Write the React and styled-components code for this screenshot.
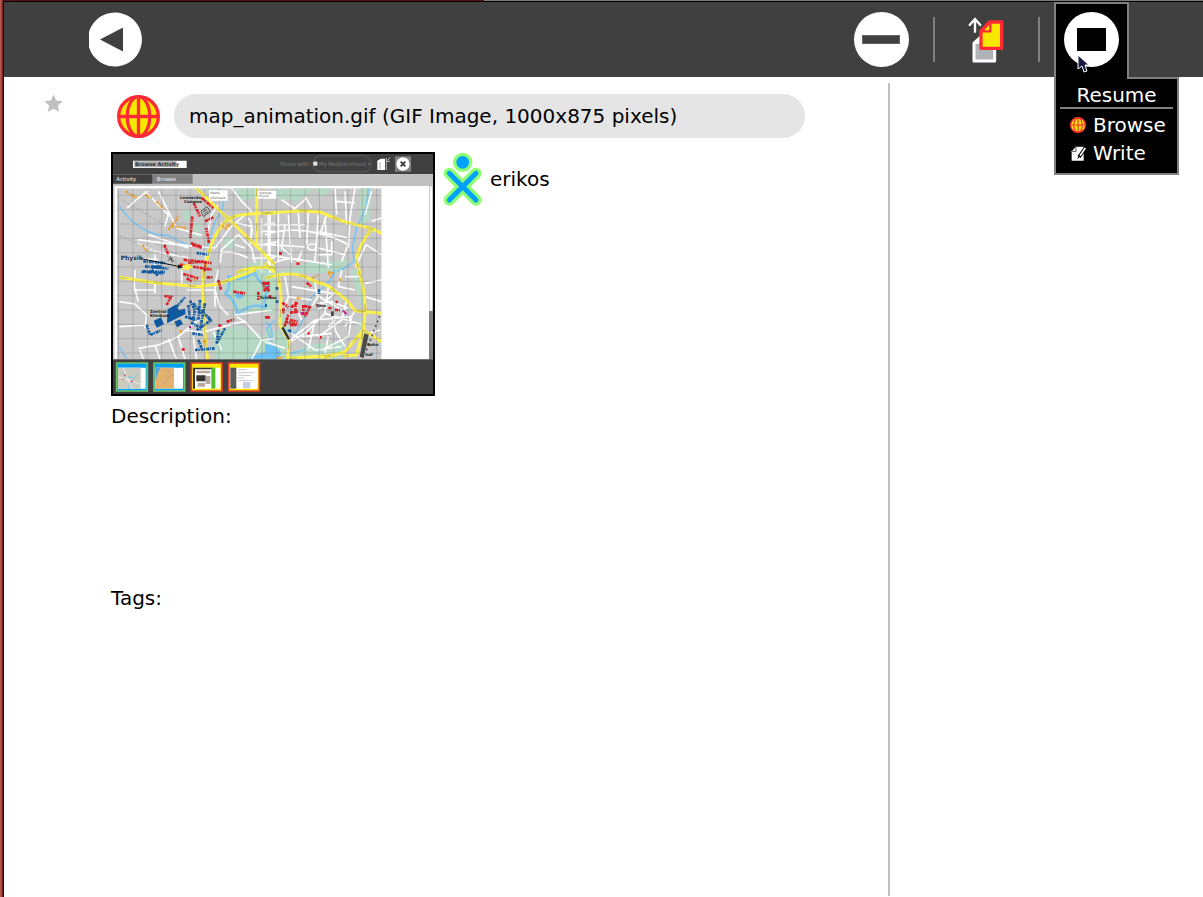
import React from 'react';
import styled, { createGlobalStyle } from 'styled-components';

const GlobalStyle = createGlobalStyle`
  * {
    box-sizing: border-box;
  }
  html, body, #root {
    height: 100%;
  }
  body {
    margin: 0;
    background: #fff;
    color: #000;
    font: 20px/24px "DejaVu Sans", sans-serif;
  }
  button, input, textarea {
    font: inherit;
    color: inherit;
  }
`;

const Frame = styled.div`
  min-height: 100%;
  display: flex;
  flex-direction: column;
  border-left: 4px solid;
  border-image: linear-gradient(to right, #b85555 0 1px, #a83a3a 1px 2px, #7e2525 2px 3px, #000 3px) 4;
`;

const TopEdge = styled.div`
  height: 2px;
  border-bottom: 1px solid #000;
  background: linear-gradient(to right, #5e1414 40%, #7b7b78 40%);
`;

const Toolbar = styled.header`
  display: flex;
  align-items: center;
  gap: 14px;
  height: 75px;
  padding: 0 74px;
  background: #404040;
`;

const Spacer = styled.div`
  flex: 1;
`;

const Separator = styled.div`
  width: 2px;
  height: 45px;
  background: #808080;
`;

const ToolButton = styled.button`
  display: flex;
  align-items: center;
  justify-content: center;
  width: 75px;
  height: 75px;
  padding: 0;
  border: 0;
  background: none;
`;

const Palette = styled.div`
  position: relative;
  height: 75px;
`;

const PaletteButton = styled(ToolButton)`
  position: relative;
  z-index: 2;
  height: 77px;
  padding-bottom: 4px;
  border: 2px solid #808080;
  border-bottom: 0;
  background: #000;
`;

const Menu = styled.div`
  position: absolute;
  z-index: 1;
  top: 100%;
  left: 0;
  width: 125px;
  padding: 4px 4px 6px;
  border: 2px solid #808080;
  background: #000;
  color: #fff;
`;

const MenuTitle = styled.div`
  margin-bottom: 2px;
  border-bottom: 2px solid #808080;
  text-align: center;
`;

const MenuItem = styled.button`
  display: flex;
  align-items: center;
  gap: 7px;
  width: 100%;
  height: 28px;
  padding: 0 0 0 10px;
  border: 0;
  background: none;
`;

const Pointer = styled.svg`
  position: absolute;
  z-index: 3;
  top: 52px;
  left: 23px;
`;

const Page = styled.main`
  flex: 1;
  display: grid;
  grid-template-columns: 884fr 315fr;
`;

const Entry = styled.section`
  display: flex;
  padding: 17px 83px 0 40px;
`;

const Side = styled.aside`
  margin: 6px 0 1px;
  border-left: 2px solid #c0c0c0;
`;

const StarButton = styled.button`
  align-self: flex-start;
  width: 67px;
  height: 19px;
  padding: 0;
  border: 0;
  background: none;
  text-align: left;

  svg {
    display: block;
  }
`;

const Details = styled.div`
  flex: 1;
  min-width: 0;
`;

const TitleRow = styled.div`
  display: flex;
  align-items: center;
  gap: 14px;
  margin-bottom: 14px;
  padding-left: 6px;
`;

const TitleInput = styled.input`
  flex: 1;
  min-width: 0;
  height: 44px;
  padding: 0 15px;
  border: 0;
  border-radius: 22px;
  background: #e5e5e5;
`;

const PreviewRow = styled.div`
  display: flex;
  align-items: flex-start;
  gap: 8px;
  margin-bottom: 8px;
`;

const Preview = styled.svg`
  flex: none;
  width: 324px;
  height: 244px;
  border: 2px solid #000;
`;

const Buddy = styled.div`
  display: flex;
  align-items: center;
  gap: 8px;
`;

const FieldLabel = styled.label`
  display: block;
`;

const TextArea = styled.textarea`
  display: block;
  width: 100%;
  height: 158px;
  padding: 0;
  border: 0;
  outline: 0;
  resize: none;
  background: none;
`;

const Globe = ({ size }) => (
  <svg width={size} height={size} viewBox="0 0 130 130" fill="none" stroke="#ff2b34" strokeWidth="10">
    <circle cx="65" cy="65" r="60" fill="#f8e800" />
    <ellipse cx="65" cy="65" rx="34" ry="60" />
    <path d="M65 5V125M5 65H125" />
  </svg>
);

const BackIcon = () => (
  <svg width="55" height="55" viewBox="0 0 55 55">
    <path fill="#fff" d="M1 20A27 27 0 1 1 1 35z" />
    <path fill="#404040" d="M12 27.5L35 15.5V39.5z" />
  </svg>
);

const MinusIcon = () => (
  <svg width="55" height="55" viewBox="0 0 55 55">
    <circle cx="27.5" cy="27.5" r="27.5" fill="#fff" />
    <rect x="8.5" y="23.5" width="37" height="8" fill="#404040" stroke="#666" strokeWidth="1" />
  </svg>
);

const ResumeIcon = () => (
  <svg width="55" height="55" viewBox="0 0 55 55">
    <circle cx="27.5" cy="27.5" r="27.5" fill="#fff" />
    <rect x="13" y="16" width="29" height="23" />
  </svg>
);

const CopyIcon = () => (
  <svg width="38" height="48" viewBox="383 45 114 144" fill="none" stroke="#fff" strokeLinejoin="round" strokeLinecap="round">
    <path strokeWidth="7" d="M404 92V54M388 72L404 54L420 72" />
    <path strokeWidth="9" fill="#b0b3b7" d="M401 126L421 108H463V180H401z" />
    <path fill="#fff" stroke="none" d="M401 126L421 106V128H401z" />
    <path strokeWidth="10" stroke="#ff2b34" fill="#f8e800" d="M422 90L448 63H484V142H422z" />
    <path strokeWidth="7" stroke="#ff2b34" d="M424 91H450V65" />
  </svg>
);

const WriteIcon = () => (
  <svg width="16" height="17" viewBox="61 434 48 51" fill="none">
    <path fill="#fff" d="M66 453L79 439H102V481H66z" />
    <path stroke="#000" strokeWidth="2" d="M67 453H79V441" />
    <path stroke="#000" strokeWidth="11" d="M108 442L88 470" />
    <path stroke="#fff" strokeWidth="5" d="M107 443L91 466" />
    <path stroke="#000" strokeWidth="3" d="M84 475L90 466" />
  </svg>
);

const BuddyIcon = () => (
  <svg width="39" height="54" viewBox="38 202 117 162" strokeLinecap="round">
    <path stroke="#8dff73" strokeWidth="34" d="M57 266L137 346M137 266L57 346" />
    <circle cx="97" cy="233" r="24" fill="#00a0ff" stroke="#8dff73" strokeWidth="10" />
    <path stroke="#00a0ff" strokeWidth="15" d="M57 266L137 346M137 266L57 346" />
  </svg>
);

const StarIcon = () => (
  <svg width="19" height="19" viewBox="0 0 19 19">
    <path fill="#c0c0c0" d="M9.5 0.5L12.200 6.500L18.700 7.200L13.900 11.600L15.200 18L9.500 14.800L3.800 18L5.100 11.600L0.300 7.200L6.800 6.500z" />
  </svg>
);

// The four quarters of the town map, each in its own coordinates
const quarters = [
  {
    at: 'translate(-24 -18)',
    parks: 'M268 222L286 228L282 268L262 260zM232 188L254 184V214L236 216zM372 264L390 282L380 304L356 300L358 272zM300 121H350L330 150zM390 121H450V150L410 160zM400 375Q410 345 470 340L510 345V375z',
    water: 'M44 175Q70 215 110 240T190 262Q250 300 306 298L330 220L350 190L358 150',
    roads: 'M66 180L100 150L130 128M160 130L215 240L290 262M98 275Q200 290 330 300M120 130L190 200L180 235M130 260L250 300M300 375V310M98 285L150 310L250 330M330 300L375 240L420 200M375 240L345 225M400 260L350 305L345 345M400 260L440 300L450 345M420 300L390 290M470 210V375M490 200V350M470 250H510M455 290H510M440 330H510M380 121L410 160L440 190M430 210Q445 230 440 260M305 265L320 200L340 170M345 315Q380 305 430 330M395 225L440 235L436 290M50 330L160 335M475 230L510 225M150 320V375',
    yellow: 'M275 121L335 180L370 212L440 280L510 350M370 212Q400 195 510 195M370 212Q325 255 310 320L295 375M455 121V295M395 375Q430 352 510 360',
    orange: 'M62 130L95 150M120 140L140 150M154 160L178 185M190 245L215 215L220 200M200 235L245 240M112 290L125 310M350 235L375 235M360 245L372 228',
    red: 'M262 205L256 270M266 165L285 205M300 220L325 208M258 285L290 297M262 291L290 299M236 335L320 345M225 350L320 365M178 290L190 320M312 285L304 240M290 150L325 180M250 345L295 340M302 340L298 372',
    blue: 'M115 340L180 345M120 355L190 362M115 370L180 372M275 315L310 320',
    solid: 'M140 352h30v10h-30z',
  },
  {
    at: 'translate(456 -18)',
    parks: 'M0 130L60 121H150L100 160L50 155zM150 121H200L170 150zM285 121H320L312 220L285 230zM30 375L130 345L250 335L230 375z',
    water: 'M310 121L305 175L275 240L262 300L268 340L240 360L215 370',
    roads: 'M0 260Q60 240 130 250T250 290M0 230H120M15 195V375M40 195V340M70 200L80 345M100 195L105 270M130 195L125 290M160 200L150 340M180 210L190 360M210 121L215 200M240 130L245 230M215 160L270 165M270 121L255 210L250 300M160 250L250 270M20 290L120 297M160 300L240 320M0 320L200 350M250 290L230 340M320 220L350 210M303 290L350 320M303 290L270 360M185 200L165 260M50 155L100 190M120 145L140 180M80 190L125 150M128 297a13 9 0 1 0 26 0a13 9 0 1 0-26 0M60 230L50 300L75 320M300 200L320 130M110 310L95 350M200 280V320H160M0 290L40 280M20 350Q60 325 110 335',
    yellow: 'M0 196L110 188L165 192L235 220L320 242L350 256M320 242Q270 310 275 345L285 375M0 345L30 375',
    orange: 'M190 372L205 375',
    red: 'M42 316h9M94 347h9',
    blue: '',
    solid: '',
  },
  {
    at: 'translate(-24 348)',
    parks: 'M355 40L440 0H510V130L440 125L390 135zM320 190L400 165L510 215V268H330z',
    water: 'M43 230L65 268M510 150L485 175L500 215',
    moat: 'M360 70Q378 58 370 18Q405 40 450 6Q458 42 492 50Q476 75 480 112Q440 95 398 132Q392 88 360 70z',
    lake: 'M428 268Q460 240 510 252V268zM391 76a12 10 0 1 0 24 0a12 10 0 1 0-24 0',
    roads: 'M90 0L88 50L100 95M43 95L90 102L125 135L120 175M43 170L120 165M150 60H85M150 40V70M100 235L160 225L220 200L280 150M105 240L115 268M150 225L165 268M190 205L215 268M330 60L345 110L370 135M300 185L390 160L420 155L470 210L510 205M390 135L500 120M220 200L240 268M340 0L330 40V110M245 60L330 60M240 180L300 190M395 140L420 155M230 0V40M470 210L440 268M265 200L275 268M325 185L350 240',
    yellow: 'M43 22L150 38L280 50L340 42L450 0M298 0L292 50L298 120L300 200L308 268',
    orange: 'M228 180V190M292 215h12M265 30H278',
    red: 'M178 78L198 80L185 105M340 30L348 60M235 12L280 25M245 25L262 35M305 22H325M340 165L350 168M365 155L387 148M475 35L480 65M490 35V65M385 65L420 70M460 65V90M485 142h12M230 238h9',
    blue: 'M255 92L270 120L262 160L280 170M285 90L280 150M265 100L290 130M275 180L320 150M262 190L295 195M125 165L135 195L170 180M215 110L240 82M270 240L330 235M340 180L335 220L360 175M280 210L290 235M110 5L175 10M140 0L160 18M310 140L320 155M240 140L275 150M290 120L315 150M250 105L255 150M300 100L285 180',
    solid: 'M146 152L168 142L177 163L155 173zM188 118L212 104L222 120L240 116L242 132L186 160zM208 155L226 148L234 162L216 172z',
  },
  {
    at: 'translate(456 348)',
    parks: 'M0 170L70 200L60 268H0zM75 250L130 225L240 215L230 268H75zM255 0H275L300 100L290 110zM290 130Q300 160 270 200zM40 130H60L75 185L45 190z',
    water: 'M210 0Q200 40 140 80L120 140L90 190L60 180M0 155Q25 165 20 215M75 250L120 240',
    lake: 'M0 222Q40 225 48 250L40 268H0z',
    roads: 'M60 20L70 80L140 90M150 35L155 75L230 120M80 50L200 70M190 48L180 130L120 190M245 90L230 150L160 200M215 60L160 120M75 210L150 150L260 140M150 150L130 240M260 140L250 200L170 240M270 60L220 50L230 0M80 190L150 240L230 230M200 120L210 180L240 230M180 130L295 165M110 200L200 190M170 60L140 110M240 20H280M300 40L350 30M300 80L350 95M75 215L120 190M190 200L180 250M270 122L240 170M70 80L60 110M85 95L110 150M160 100L200 95L250 115M0 215L60 235M310 190L345 180M210 150L190 170',
    yellow: 'M0 25L40 15Q100 5 140 30L190 48L245 90L270 122L350 130M280 0Q302 60 300 130L295 180L240 245L170 268M40 15L48 80L45 165L72 210L68 268M295 180L350 215M295 180L275 255L235 258M72 265L180 258L240 248',
    orange: 'M140 25L160 15M190 10L200 22M225 25V35M95 85H108M35 265L55 262',
    red: 'M52 98L70 112M78 112L98 98M92 95V130M75 128L100 125M60 155L100 165M75 165H95M115 105V138M136 108L120 140M118 108L138 112M0 40h12M0 55h12M215 92v8M190 114h12M210 120h15M128 190h5M165 202h5M125 38L140 50M15 75V85M0 142h12M55 115V130M58 170L70 135M75 150L98 155',
    blue: 'M162 58V72M32 55h8M32 95h8M70 182h8M0 107h6',
    solid: '',
  },
];

const columns = Array.from({ length: 19 }, (_, i) => 17 + i * 43);
const rows = Array.from({ length: 12 }, (_, i) => 124 + i * 43);

const Layer = ({ of, ...props }) => (
  <g {...props}>
    {quarters.map((q) => q[of] && <path key={q.at} transform={q.at} d={q[of]} />)}
  </g>
);

const TownMap = () => (
  <g clipPath="url(#map)" fill="none" fontFamily="DejaVu Sans, sans-serif">
    <path fill="#c9c9c9" d="M12 103H806V616H12z" />
    <Layer of="parks" fill="#b5d9c4" />
    <Layer of="lake" fill="#6dc1f2" />
    <Layer of="water" stroke="#7dc4ef" strokeWidth="5" />
    <Layer of="moat" stroke="#7dc4ef" strokeWidth="8" strokeLinejoin="round" />
    <Layer of="roads" stroke="#fff" strokeWidth="5" strokeLinejoin="round" />
    <Layer of="yellow" stroke="#fbf04c" strokeWidth="9" strokeLinejoin="round" />
    <Layer of="yellow" stroke="#a09a50" strokeWidth="2" strokeDasharray="24 80" />
    <Layer of="orange" stroke="#f29c1f" strokeWidth="6" strokeDasharray="8 3 4 3" />
    <Layer of="red" stroke="#dd1f24" strokeWidth="8" strokeDasharray="10 2 5 3" />
    <Layer of="blue" stroke="#0d5aa3" strokeWidth="8" strokeDasharray="8 2 4 3" />
    <Layer of="solid" fill="#0d5aa3" />
    <g stroke="#555" strokeOpacity="0.35" strokeWidth="2">
      {columns.map((x) => <path key={x} d={`M${x} 103V616`} />)}
      {rows.map((y) => <path key={y} d={`M12 ${y}H806`} />)}
    </g>
    <path stroke="#999" strokeWidth="2" strokeDasharray="10 5" d="M30 140L150 210M20 245L170 310M130 270L250 330" />
    <path stroke="#555" strokeWidth="3" d="M264 172L282 158L292 172L272 188zM270 173L282 167M274 180L286 172M180 312L164 320M172 306L178 326M166 310L184 322" />
    <path fill="#fbf04c" d="M210 332L228 330L240 338L226 348L208 346z" />
    <path stroke="#111" strokeWidth="3" d="M86 314L200 338" />
    <path fill="#111" d="M196 331L210 340L194 344z" />
    <path fill="#4a4a4a" d="M754 538L767 542L752 612L740 608z" />
    <path stroke="#444" strokeWidth="5" strokeDasharray="5 10" d="M800 486L760 590" />
    <path stroke="#333" strokeWidth="7" d="M508 520L528 556" />
    <path fill="#444" d="M654 472h8v14h-8z" />
    <path stroke="#c9169a" strokeWidth="6" d="M690 470L700 480M562 478h8M228 519h6" />
    <path fill="#fff" d="M288 109H344V140H288zM434 110H490V134H434z" />
    <g fill="#222" fontWeight="bold" fontSize="12">
      <text x="201" y="135">Leonardo</text>
      <text x="213" y="147">Campus</text>
      <text x="23" y="319" fontSize="18">Physik</text>
      <text x="111" y="478">Zentral-</text>
      <text x="111" y="489">Klinikum</text>
      <text x="440" y="434">Schloss</text>
      <text x="609" y="460">Dom</text>
      <text x="762" y="576">Bahn</text>
      <text x="757" y="606">hof</text>
    </g>
    <g fill="#555" fontSize="9">
      <text x="292" y="120">Mathe</text>
      <text x="292" y="134">Informatik</text>
      <text x="438" y="120">Institute</text>
      <text x="438" y="130">Physik</text>
    </g>
  </g>
);

const ScreenPreview = () => (
  <Preview viewBox="0 0 960 720" role="img" aria-label="Preview" fontFamily="DejaVu Sans, sans-serif">
    <clipPath id="map"><path d="M12 103H806V616H12z" /></clipPath>
    <path fill="#fff" d="M0 0H960V720H0z" />
    <path fill="#404040" d="M0 0H960V61H0z" />
    <path fill="#c0c0c0" d="M0 61H960V96H0z" />
    <path fill="#fff" d="M5 96H948V102H5z" />
    <path fill="#404040" d="M0 61H119V89H0z" />
    <path fill="#808080" d="M119 61H239V89H119z" />
    <path fill="#fff" d="M60 20H221V42H60z" />
    <path fill="#aaa" d="M64 22H190V40H64z" />
    <text x="66" y="37" fontSize="15" fontWeight="bold" fill="#333">Browse Activity</text>
    <text x="10" y="81" fontSize="16" fill="#eee">Activity</text>
    <text x="131" y="81" fontSize="16" fill="#eee">Browse</text>
    <text x="502" y="36" fontSize="16" fill="#777">Share with:</text>
    <rect x="600" y="5" width="174" height="49" rx="24" fill="none" stroke="#666" strokeWidth="2" />
    <circle cx="607" cy="29" r="7" fill="#ddd" />
    <text x="618" y="36" fontSize="16" fill="#777">My Neighborhood</text>
    <path fill="#777" d="M764 27H772L768 33z" />
    <path fill="#fff" d="M793 20L803 14H816V48H793z" />
    <path fill="none" stroke="#b0b0b0" strokeWidth="3" d="M801 24V46M820 20V48M832 11L821 20M820 12V22H831" />
    <rect x="846" y="7" width="48" height="46" fill="#808080" />
    <circle cx="870" cy="30" r="20" fill="#fff" />
    <path stroke="#404040" strokeWidth="6" d="M863 23L877 37M877 23L863 37" />
    <TownMap />
    <path fill="#c9c9c9" d="M0 96H5V616H0zM948 96H960V616H948z" />
    <path fill="#fff" d="M951 98H957V471H951z" />
    <path fill="#808080" d="M948 471H960V616H948z" />
    <path fill="#404040" d="M0 616H960V720H0z" />
    <g strokeWidth="5">
      <path fill="#00a0ff" stroke="#6cc56c" d="M11 627H103V711H11z" />
      <path fill="#00a0ff" stroke="#6cc56c" d="M123 627H215V711H123z" />
      <path fill="#f8e800" stroke="#e23a2c" d="M235 627H327V711H235z" />
      <path fill="#f8e800" stroke="#e23a2c" d="M347 627H439V711H347z" />
    </g>
    <path fill="#fff" d="M15 641H98V704H15zM127 641H210V704H127zM240 641H322V704H240zM352 641H434V704H352z" />
    <path fill="#cacabf" d="M15 641H83V704H15z" />
    <path fill="none" stroke="#7dc4ef" strokeWidth="3" d="M25 655L40 668L60 670M45 704L52 684L75 660" />
    <path fill="none" stroke="#fff" strokeWidth="2" d="M15 668L82 690M30 641L58 704" />
    <path fill="none" stroke="#d44" strokeWidth="3" d="M33 664h6M52 682h8M28 676h5" />
    <path fill="#e4b26f" d="M127 641H183V704H127z" />
    <path fill="#55a2e0" d="M127 641H142L134 660L128 680z" />
    <path fill="none" stroke="#a98" strokeWidth="2" d="M150 690L165 670L180 662M155 650L172 652" />
    <path fill="#333" d="M240 641H300V646H240zM240 646H246V704H240zM250 664H278V682H250z" />
    <path fill="#b8a8a0" d="M250 650H292V658H250zM278 666H292V690H278zM254 686H276V698H254z" />
    <path fill="#4cc02c" d="M295 641H307V704H295z" />
    <path fill="#5a5a5a" d="M352 641H370V704H352z" />
    <path fill="none" stroke="#aaa" strokeWidth="2" d="M376 647H400M376 656H425M376 664H415M374 672H395M376 680H420" />
    <path fill="#c3cfe2" d="M390 684H412V703H390z" />
  </Preview>
);

const App = () => (
  <Frame>
    <GlobalStyle />
    <TopEdge />
    <Toolbar>
      <ToolButton aria-label="Back"><BackIcon /></ToolButton>
      <Spacer />
      <ToolButton aria-label="Erase"><MinusIcon /></ToolButton>
      <Separator />
      <ToolButton aria-label="Copy"><CopyIcon /></ToolButton>
      <Separator />
      <Palette>
        <PaletteButton aria-label="Resume"><ResumeIcon /></PaletteButton>
        <Menu>
          <MenuTitle>Resume</MenuTitle>
          <MenuItem><Globe size={16} />Browse</MenuItem>
          <MenuItem><WriteIcon />Write</MenuItem>
        </Menu>
        <Pointer width="14" height="20" viewBox="0 0 14 20">
          <path fill="#1a1a40" stroke="#fff" d="M1 1V15L5 12L7 18L10 17L8 11L12 11z" />
        </Pointer>
      </Palette>
    </Toolbar>
    <Page>
      <Entry>
        <StarButton aria-label="Favorite"><StarIcon /></StarButton>
        <Details>
          <TitleRow>
            <Globe size={43} />
            <TitleInput aria-label="Title" defaultValue="map_animation.gif (GIF Image, 1000x875 pixels)" />
          </TitleRow>
          <PreviewRow>
            <ScreenPreview />
            <Buddy>
              <BuddyIcon />
              erikos
            </Buddy>
          </PreviewRow>
          <FieldLabel htmlFor="description">Description:</FieldLabel>
          <TextArea id="description" />
          <FieldLabel htmlFor="tags">Tags:</FieldLabel>
          <TextArea id="tags" />
        </Details>
      </Entry>
      <Side />
    </Page>
  </Frame>
);

export default App;
